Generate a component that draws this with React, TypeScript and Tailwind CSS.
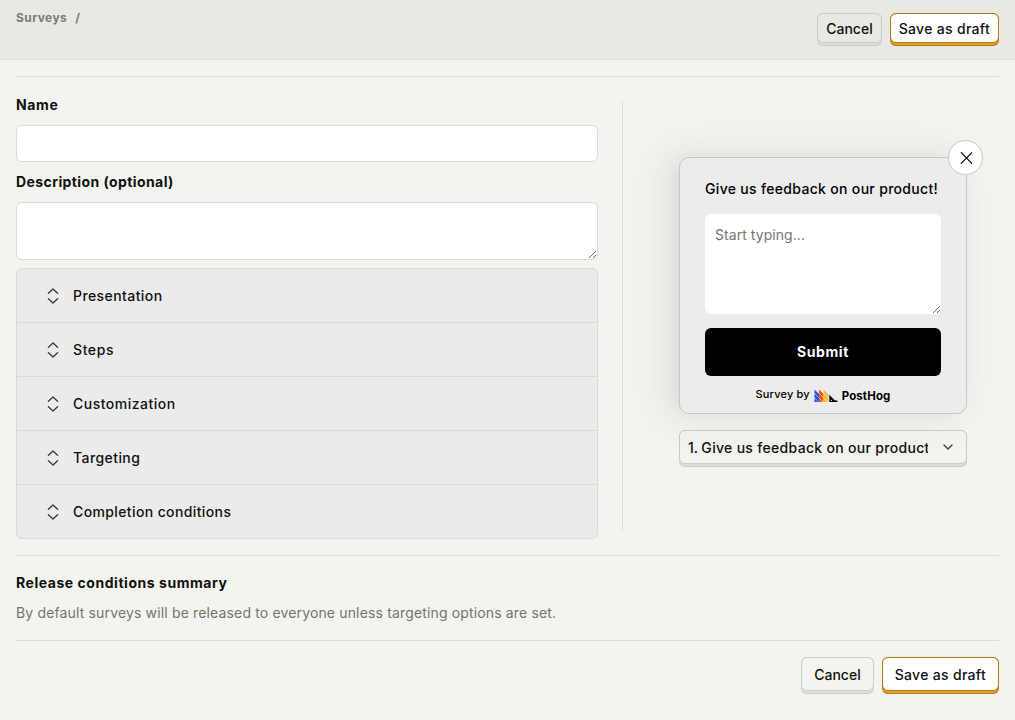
import React from "react";

const sections = [
  { name: "Presentation", tracking: "tracking-[0.42px]" },
  { name: "Steps", tracking: "tracking-[0.6px]" },
  { name: "Customization", tracking: "tracking-[0.5px]" },
  { name: "Targeting", tracking: "tracking-[0.42px]" },
  { name: "Completion conditions", tracking: "tracking-[0.38px]" },
];

function Button({ label, primary = false, large = false }: { label: string; primary?: boolean; large?: boolean }) {
  const height = large ? "h-[37px]" : "h-[33px]";
  const padding = large ? "px-3" : "px-2";
  const tracking = primary ? "tracking-[0.31px]" : "tracking-normal";
  const chrome = primary ? "border-[#b17816] bg-[#eb9d2a]" : "border-[#ccc] bg-[#e1dddd]";
  const front = primary ? "border-[#b17816] bg-white" : large ? "border-[#ccc] bg-[#f3f4ef]" : "border-[#ccc] bg-[#e8e9e3]";
  return (
    <button type="button" className={`flex rounded-md border border-t-0 pb-0.5 ${height} ${chrome}`}>
      <span className={`-mx-px flex h-full items-center rounded-md border pt-0.5 font-medium whitespace-nowrap text-[#111] ${padding} ${tracking} ${front}`}>
        {label}
      </span>
    </button>
  );
}

function SortIcon() {
  return (
    <svg className="h-4 w-4" viewBox="0 0 16 16" fill="none" stroke="#3c3c3c" strokeWidth="1.4" strokeLinecap="round" strokeLinejoin="round">
      <path d="M3.400 5.200 8 1.100 12.600 5.200M3.400 10.800 8 14.900 12.600 10.800" />
    </svg>
  );
}

function PostHogMark() {
  return (
    <svg className="h-[13px] w-6 shrink-0" viewBox="0 0 24 13">
      <path fill="#1d4aff" d="M.5 9.200 4.300 13H.5zM.5 4.800 5 9.300V13L.5 8.500zM.5.400 5 4.900v3.700L.5 4.100z" />
      <path fill="#f54e00" d="M5 9.200 8.800 13H5zM5 4.800l4.500 4.500V13L5 8.500zM5 .4l4.500 4.500v3.700L5 4.100z" />
      <path fill="#f9bd2b" d="M9.500 9.200 13.300 13H9.500zM9.500 4.800 14.500 9.800v3.200L9.500 8.500zM9.500.4l5 5v3.700l-5-5z" />
      <path fill="#000" d="M15.300 13V5.800l5.500 5.500 2.700.500V13z" />
      <circle cx="17.400" cy="11.300" r=".6" fill="#fff" />
    </svg>
  );
}

export default function App() {
  return (
    <div className="h-[720px] w-full overflow-hidden bg-[#f3f4ef] font-['Inter',sans-serif] text-sm leading-5 text-[#111]">
      <header className="flex h-[60px] items-start justify-between border-b border-[#e2e3dd] bg-[#e8e9e3] px-4">
        <nav className="flex gap-2 pt-[9px] text-xs leading-[18px] font-bold tracking-[0.42px] text-[#7b7c78]">
          <span>Surveys</span>
          <span>/</span>
        </nav>
        <div className="flex gap-2 pt-[13px]">
          <Button label="Cancel" />
          <Button label="Save as draft" primary />
        </div>
      </header>

      <main className="px-4 pt-4">
        <div className="flex border-t border-[#dadbd3] pt-6">
          <form className="flex w-[582px] flex-col">
            <label htmlFor="name" className="-mt-1.5 h-5 font-bold tracking-[0.6px]">Name</label>
            <input id="name" className="mt-[10px] h-[37px] rounded-md border border-[#dadbd3] bg-white px-2" />
            <label htmlFor="description" className="mt-[10px] h-5 font-bold tracking-[0.41px]">Description (optional)</label>
            <textarea id="description" className="mt-[10px] h-[58px] rounded-md border border-[#dadbd3] bg-white p-2" />
            <div className="mt-2 overflow-hidden rounded-md border border-[#dadbd3] bg-[#ebebeb]">
              {sections.map(({ name, tracking }) => (
                <button type="button" key={name} className={`flex h-[54px] w-full items-center gap-3 border-b border-[#dadbd3] pl-7 font-medium last:h-[53px] last:border-b-0 ${tracking}`}>
                  <SortIcon />
                  {name}
                </button>
              ))}
            </div>
          </form>

          <div className="ml-6 h-[430px] w-px bg-[#dadbd3]" />

          <aside className="ml-14 w-[288px] pt-14">
            <div className="relative h-[257px] rounded-[10px] border border-[#c9c6c6] bg-[#ececec] px-[25px] pt-[21px] text-black shadow-[-6px_0_16px_-8px_rgb(0_0_0/0.08),-9px_0_28px_0_rgb(0_0_0/0.05),-12px_0_48px_16px_rgb(0_0_0/0.03)]">
              <button type="button" aria-label="Close" className="absolute -top-[17.6px] -right-[17.4px] flex h-[35px] w-[35px] items-center justify-center rounded-full border border-[#c9c6c6] bg-white">
                <svg className="h-3 w-3" viewBox="0 0 12 12" fill="none" stroke="#000" strokeWidth="1.200" strokeLinecap="round">
                  <path d="m1.200.700 10.600 10.600M11.800.700 1.200 11.300" />
                </svg>
              </button>
              <div className="h-5 font-medium tracking-[0.32px] whitespace-nowrap">Give us feedback on our product!</div>
              <textarea placeholder="Start typing..." className="mt-[15px] block h-[100px] w-full rounded-md bg-white p-[10px] leading-[22px] tracking-[0.06px] placeholder:text-[#757575]" />
              <button type="button" className="mt-[14px] block h-12 w-full rounded-md bg-black font-bold tracking-[0.6px] text-white">Submit</button>
              <div className="mt-[10px] flex h-[19px] items-center justify-center text-[11px] font-medium">
                <span className="-mt-[3px] mr-1 tracking-[0.16px]">Survey by</span>
                <PostHogMark />
                <span className="ml-1 text-[11.5px] font-bold tracking-[0.1px]">PostHog</span>
              </div>
            </div>

            <button type="button" className="mt-4 flex h-[37px] w-full rounded-md border border-t-0 border-[#ccc] bg-[#e1dddd] pb-0.5">
              <span className="-mx-px flex h-full w-[288px] shrink-0 items-center rounded-md border border-[#ccc] bg-[#f3f4ef] pr-[11px] pl-2 font-medium">
                <span className="mt-0.5 w-[240px] overflow-hidden text-left tracking-[0.31px] whitespace-nowrap"><span className="tracking-[-0.1px]">1. </span>Give us feedback on our product!</span>
                <svg className="ml-auto h-3.5 w-3.5" viewBox="0 0 14 14" fill="none" stroke="#3c3c3c" strokeWidth="1.400" strokeLinecap="round" strokeLinejoin="round">
                  <path d="m3 5 4 4 4-4" />
                </svg>
              </span>
            </button>
          </aside>
        </div>

        <section className="mt-4 border-t border-[#dadbd3] pt-[17px]">
          <h3 className="h-5 font-bold tracking-[0.54px]">Release conditions summary</h3>
          <p className="mt-[10px] h-5 tracking-[0.15px] text-[#73746f]">By default surveys will be released to everyone unless targeting options are set.</p>
        </section>
        <footer className="mt-[17px] flex justify-end gap-2 border-t border-[#dadbd3] pt-4">
          <Button label="Cancel" large />
          <Button label="Save as draft" primary large />
        </footer>
      </main>
    </div>
  );
}
